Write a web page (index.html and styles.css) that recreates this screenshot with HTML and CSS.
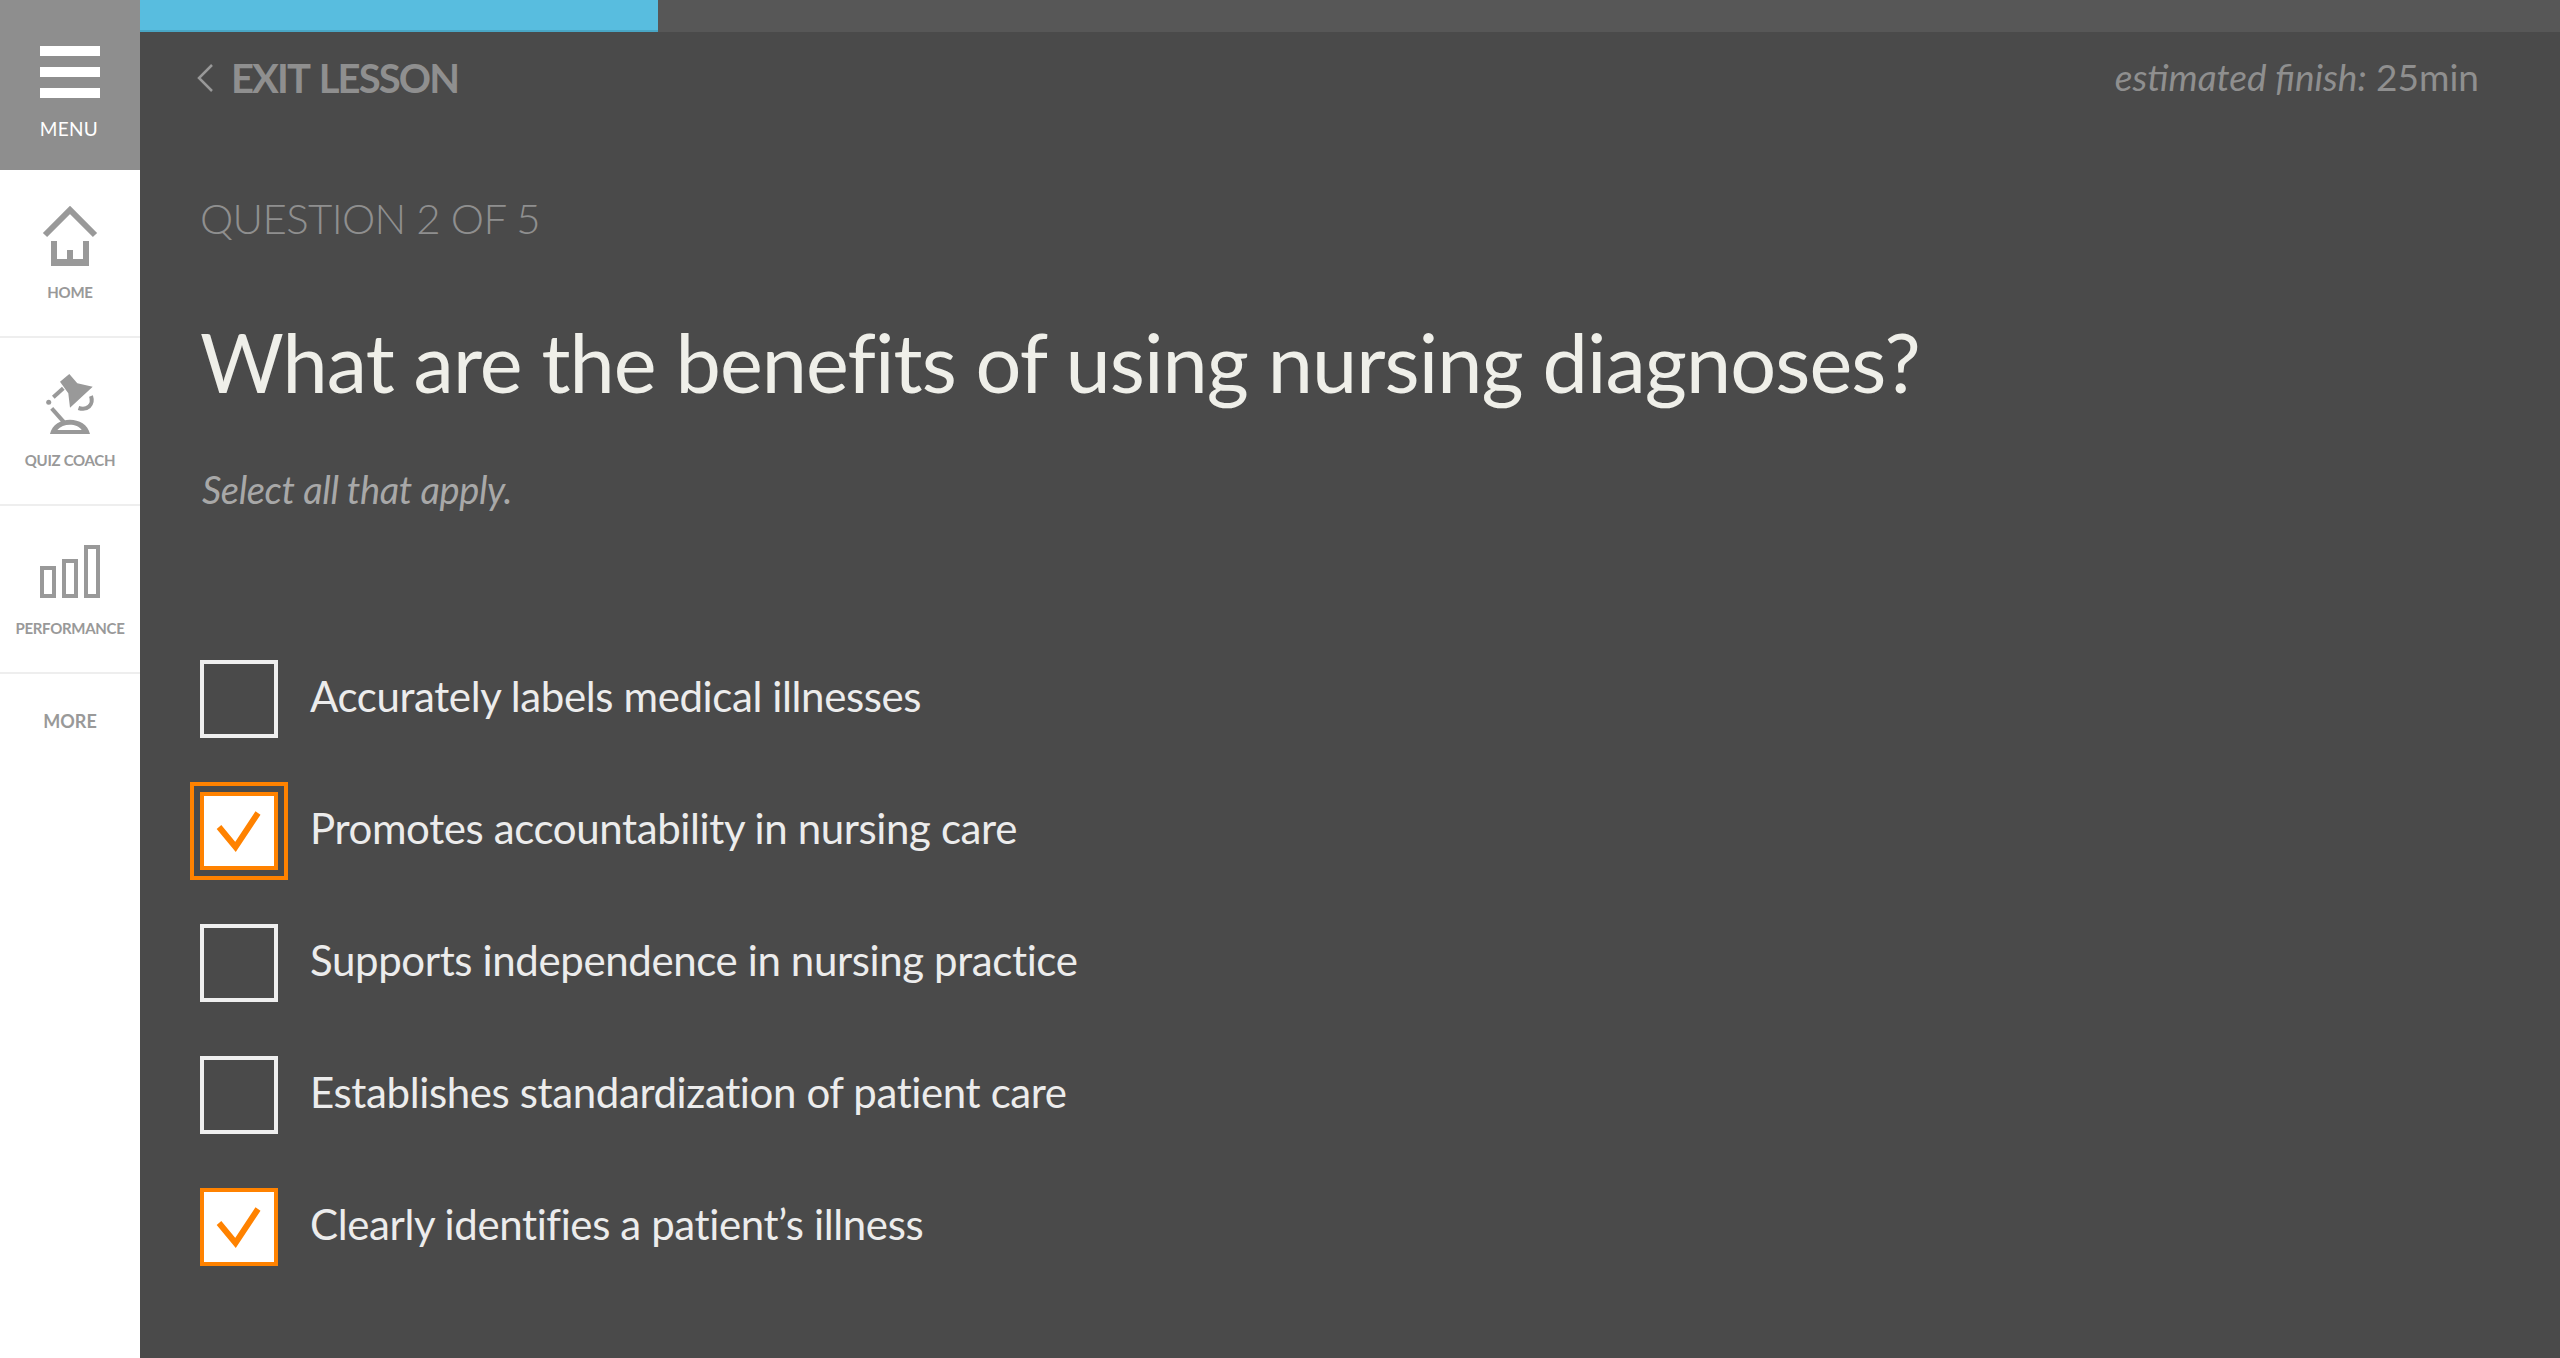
FILE: index.html
```html
<!DOCTYPE html>
<html lang="en">
<head>
<meta charset="utf-8">
<title>Lesson question</title>
<link rel="stylesheet" href="styles.css">
</head>
<body>
<div class="app">
  <nav class="sidebar">
    <div class="menu">
      <div class="burger"><span></span><span></span><span></span></div>
      <div class="menu-label">MENU</div>
    </div>
    <div class="nav-item">
      <svg class="nav-icon" width="56" height="62" viewBox="0 0 56 62"><path d="M3 31 L28 6 L53 31" fill="none" stroke="#999" stroke-width="6"/><path d="M9 37h6v18h10v-9h6v9h10V37h6v25H9z" fill="#999"/></svg>
      <div class="nav-label">HOME</div>
    </div>
    <div class="nav-item">
      <svg class="nav-icon" width="56" height="62" viewBox="0 0 56 62"><path d="M18 9.7 L27.3 2 L35.3 11.3 L50.7 14.7 L28 35.7 L26.3 21.3z" fill="#999"/><path d="M21.3 16.3 L11.3 25.3" stroke="#999" stroke-width="4" fill="none"/><circle cx="6.7" cy="30.3" r="2.5" fill="#999"/><path d="M36.5 36 C45 39 52 33 49 24" stroke="#999" stroke-width="4" fill="none"/><path d="M9.7 36.3 L23 51.3" stroke="#999" stroke-width="4" fill="none"/><path fill-rule="evenodd" d="M8 62 C12 43 44 43 48 62z M15.3 58 H39.7 C35 51 21 51 15.3 58z" fill="#999"/></svg>
      <div class="nav-label">QUIZ COACH</div>
    </div>
    <div class="nav-item">
      <svg class="nav-icon" width="60" height="62" viewBox="0 0 60 62"><g fill="none" stroke="#999" stroke-width="4"><rect x="2" y="28" width="12" height="28"/><rect x="24" y="21" width="12" height="35"/><rect x="46" y="7" width="12" height="49"/></g></svg>
      <div class="nav-label">PERFORMANCE</div>
    </div>
    <div class="more">MORE</div>
  </nav>
  <main class="main">
    <div class="progress"><div class="progress-fill"></div></div>
    <div class="content">
      <header class="topbar">
        <div class="exit">
          <svg width="18" height="28" viewBox="0 0 18 28"><path d="M16 1 L3 14 L16 27" fill="none" stroke="#999" stroke-width="2.5"/></svg>
          <span>EXIT LESSON</span>
        </div>
        <div class="finish"><em>estimated finish:</em> 25min</div>
      </header>
      <div class="qnum">QUESTION 2 OF 5</div>
      <h1 class="title">What are the benefits of using nursing diagnoses?</h1>
      <p class="hint">Select all that apply.</p>
      <ul class="options">
        <li class="option"><span class="box"></span><span class="option-text">Accurately labels medical illnesses</span></li>
        <li class="option"><span class="box checked focus"><svg width="46" height="44" viewBox="0 0 46 44"><path d="M3 18 L19.5 38 L42 4" fill="none" stroke="#ff8200" stroke-width="6"/></svg></span><span class="option-text">Promotes accountability in nursing care</span></li>
        <li class="option"><span class="box"></span><span class="option-text">Supports independence in nursing practice</span></li>
        <li class="option"><span class="box"></span><span class="option-text">Establishes standardization of patient care</span></li>
        <li class="option"><span class="box checked"><svg width="46" height="44" viewBox="0 0 46 44"><path d="M3 18 L19.5 38 L42 4" fill="none" stroke="#ff8200" stroke-width="6"/></svg></span><span class="option-text">Clearly identifies a patient’s illness</span></li>
      </ul>
    </div>
  </main>
</div>
</body>
</html>
```
FILE: styles.css
```css
* { box-sizing: border-box; }
html, body { margin: 0; height: 100%; }
body { font-family: Lato, "Noto Sans", sans-serif; background: #4a4a4a; overflow: hidden; }
.app { display: flex; height: 1358px; }
.sidebar { width: 140px; flex: none; background: #fff; display: flex; flex-direction: column; }
.menu { height: 170px; background: #8e8e8e; display: flex; flex-direction: column; align-items: center; padding-top: 46px; color: #fff; }
.burger { width: 60px; display: flex; flex-direction: column; gap: 11px; margin-left: -1px; }
.burger span { display: block; height: 10px; background: #fff; }
.menu-label { font-size: 19px; margin-top: 19px; line-height: 24px; letter-spacing: .3px; margin-left: -2px; }
.nav-item { height: 168px; border-bottom: 2px solid #eee; display: flex; flex-direction: column; align-items: center; padding-top: 34px; }
.nav-icon { display: block; flex: none; }
.nav-label { font-size: 15px; line-height: 20px; color: #999; margin-top: 16px; white-space: nowrap; letter-spacing: -.3px; font-weight: 700; }
.more { text-align: center; font-size: 18px; line-height: 22px; color: #999; margin-top: 36px; font-weight: 700; }
.main { flex: 1; display: flex; flex-direction: column; min-width: 0; }
.progress { height: 32px; background: #575757; flex: none; }
.progress-fill { width: 518px; height: 32px; background: #58bddf; border-bottom: 2px solid #49a6c5; }
.content { padding: 0 81px 0 60px; }
.topbar { display: flex; justify-content: space-between; align-items: center; height: 92px; }
.exit { display: flex; align-items: center; gap: 17px; color: #8f8f8f; font-size: 40px; font-weight: 700; letter-spacing: -1.9px; word-spacing: 3px; margin-left: -4px; }
.finish { color: #8f8f8f; font-size: 37px; font-weight: 400; padding-bottom: 4px; }
.finish em { font-style: italic; }
.qnum { margin-top: 67px; font-size: 42px; line-height: 54px; color: #8f8f8f; font-weight: 300; letter-spacing: -.65px; }
.title { margin: 67px 0 0; font-size: 81px; line-height: 100px; font-weight: 400; color: #efefe9; letter-spacing: -.92px; white-space: nowrap; }
.hint { margin: 52px 0 0 2px; font-size: 38px; line-height: 50px; font-style: italic; font-weight: 400; color: #a8a8a8; letter-spacing: -.36px; }
.options { list-style: none; margin: 146px 0 0; padding: 0; display: flex; flex-direction: column; gap: 54px; }
.option { display: flex; align-items: center; gap: 32px; height: 78px; font-size: 42px; font-weight: 400; color: #ececec; }
.option-text { letter-spacing: -.38px; padding-bottom: 6px; }
.box { width: 78px; height: 78px; flex: none; border: 4px solid #efefef; display: flex; align-items: center; justify-content: center; }
.box.checked { background: #fff; border-color: #ff8200; }
.box.focus { outline: 4px solid #ff8200; outline-offset: 6px; }
```
